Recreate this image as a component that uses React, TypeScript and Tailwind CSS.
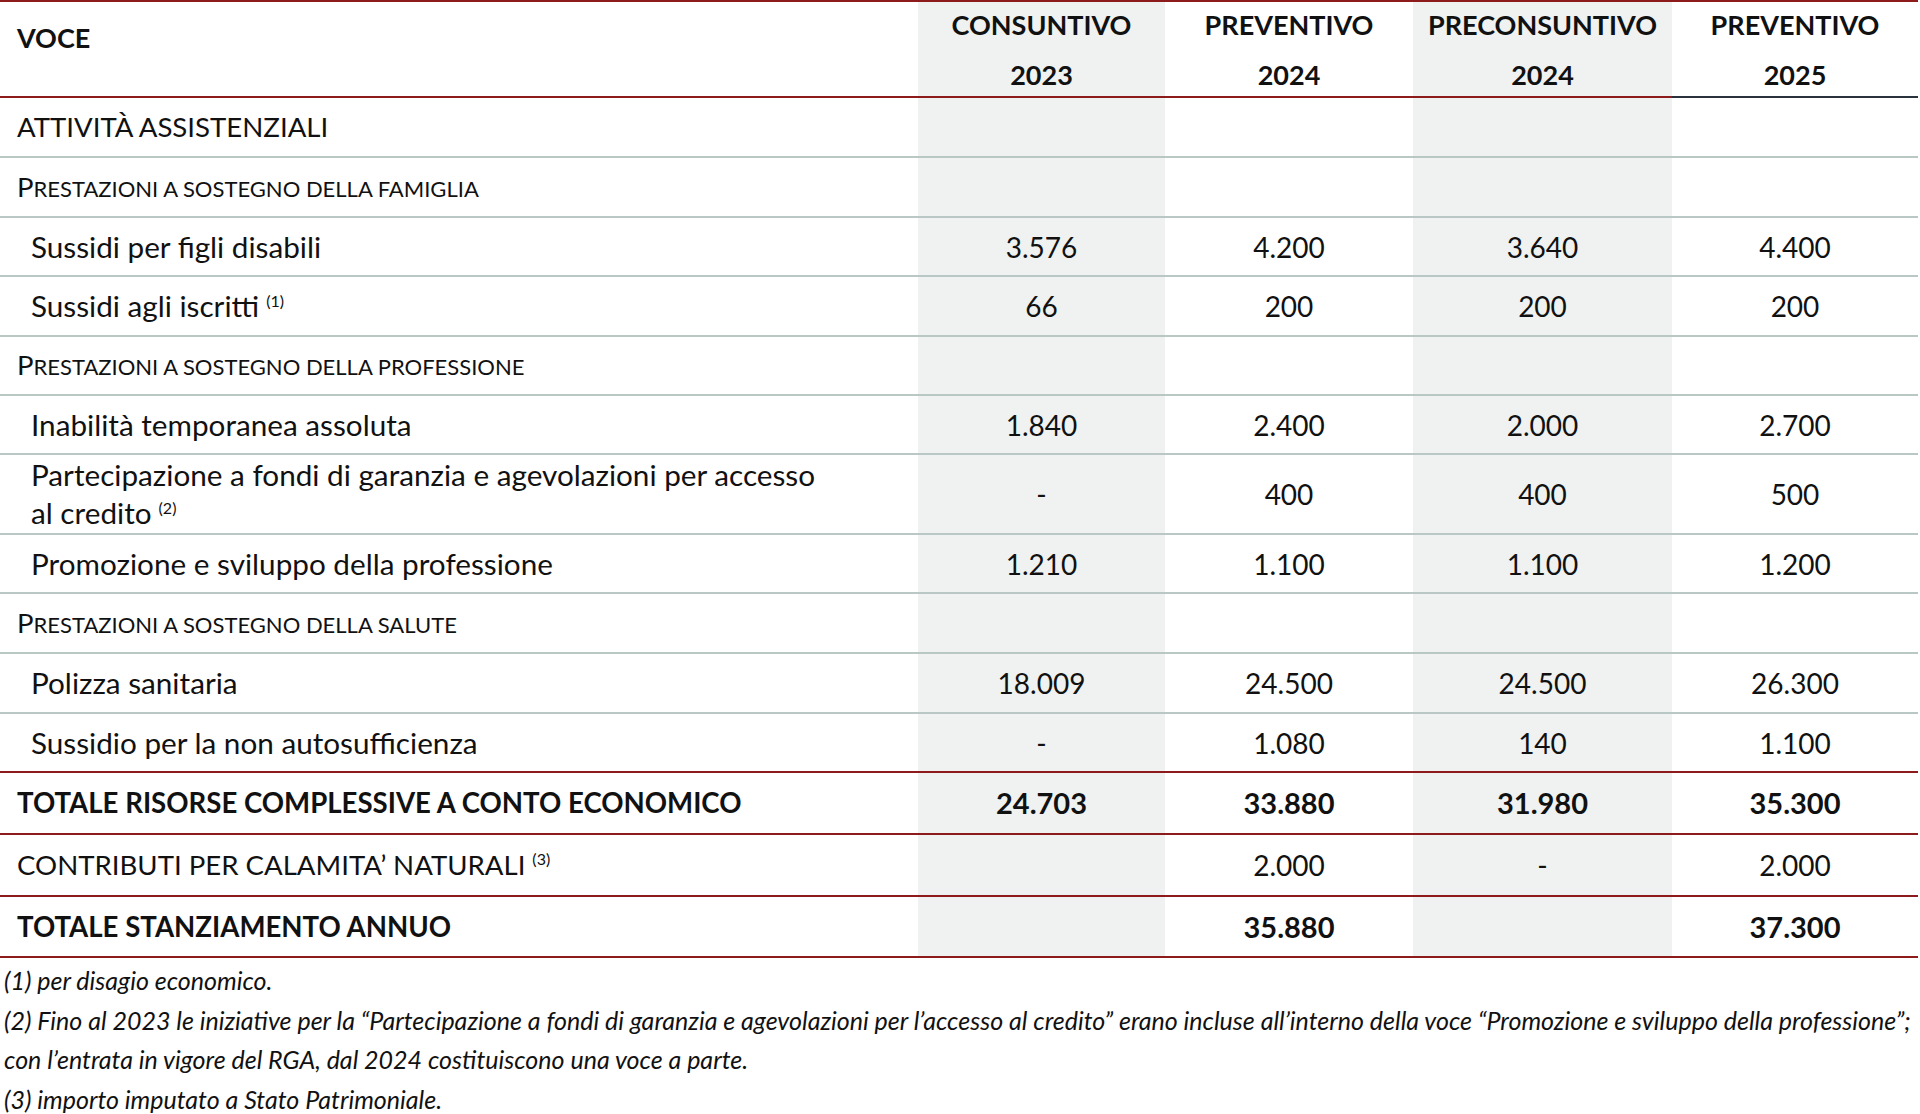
const COLS = "grid grid-cols-[918px_247px_248px_259px_246px]"

type Row = {
  label: React.ReactNode
  kind: "section" | "group" | "item" | "total" | "plain"
  values?: string[]
  h: string
  line: "gray" | "red"
}

const Sup = ({ n }: { n: number }) => (
  <span className="relative -top-[10px] ml-[7px] inline-block text-[16px] leading-none">({n})</span>
)

// maiuscoletto: prima lettera grande, resto piccolo
const SmallCaps = ({ text }: { text: string }) => (
  <>
    <span className="text-[27.5px]">{text[0]}</span>
    <span className="text-[22px] uppercase">{text.slice(1)}</span>
  </>
)

const ROWS: Row[] = [
  { label: "ATTIVITÀ ASSISTENZIALI", kind: "section", h: "h-[60px]", line: "gray" },
  { label: <SmallCaps text="Prestazioni a sostegno della famiglia" />, kind: "group", h: "h-[60px]", line: "gray" },
  { label: "Sussidi per figli disabili", kind: "item", values: ["3.576", "4.200", "3.640", "4.400"], h: "h-[59px]", line: "gray" },
  {
    label: (
      <>
        Sussidi agli iscritti
        <Sup n={1} />
      </>
    ),
    kind: "item",
    values: ["66", "200", "200", "200"],
    h: "h-[60px]",
    line: "gray",
  },
  { label: <SmallCaps text="Prestazioni a sostegno della professione" />, kind: "group", h: "h-[59px]", line: "gray" },
  { label: "Inabilità temporanea assoluta", kind: "item", values: ["1.840", "2.400", "2.000", "2.700"], h: "h-[59px]", line: "gray" },
  {
    label: (
      <>
        Partecipazione a fondi di garanzia e agevolazioni per accesso
        <br />
        al credito
        <Sup n={2} />
      </>
    ),
    kind: "item",
    values: ["-", "400", "400", "500"],
    h: "h-[80px]",
    line: "gray",
  },
  { label: "Promozione e sviluppo della professione", kind: "item", values: ["1.210", "1.100", "1.100", "1.200"], h: "h-[59px]", line: "gray" },
  { label: <SmallCaps text="Prestazioni a sostegno della salute" />, kind: "group", h: "h-[60px]", line: "gray" },
  { label: "Polizza sanitaria", kind: "item", values: ["18.009", "24.500", "24.500", "26.300"], h: "h-[60px]", line: "gray" },
  { label: "Sussidio per la non autosufficienza", kind: "item", values: ["-", "1.080", "140", "1.100"], h: "h-[59px]", line: "red" },
  {
    label: "TOTALE RISORSE COMPLESSIVE A CONTO ECONOMICO",
    kind: "total",
    values: ["24.703", "33.880", "31.980", "35.300"],
    h: "h-[62px]",
    line: "red",
  },
  {
    label: (
      <>
        CONTRIBUTI PER CALAMITA’ NATURALI
        <Sup n={3} />
      </>
    ),
    kind: "plain",
    values: ["", "2.000", "-", "2.000"],
    h: "h-[62px]",
    line: "red",
  },
  { label: "TOTALE STANZIAMENTO ANNUO", kind: "total", values: ["", "35.880", "", "37.300"], h: "h-[61px]", line: "red" },
]

const HEADERS = [
  ["CONSUNTIVO", "2023"],
  ["PREVENTIVO", "2024"],
  ["PRECONSUNTIVO", "2024"],
  ["PREVENTIVO", "2025"],
]

function labelClass(kind: Row["kind"]) {
  switch (kind) {
    case "section":
    case "plain":
      return "pl-[17px] text-[27.6px]"
    case "group":
      return "pl-[17px] pt-[3px]"
    case "item":
      return "pl-[31px] text-[29.7px]"
    case "total":
      return "pl-[17px] text-[27.6px] font-bold"
  }
}

export default function App() {
  return (
    <div
      className="w-[1920px] bg-white text-[#111111]"
      style={{ fontFamily: "Lato, 'Liberation Sans', sans-serif" }}
    >
      <div className="w-[1918px] border-t-2 border-[#8e1b1b]">
        {/* intestazione */}
        <div className={COLS}>
          <div className="h-[96px] border-b-2 border-[#8e1b1b] pl-[17px] pt-[19px] text-[27px] font-bold leading-[34px]">
            VOCE
          </div>
          {HEADERS.map(([a, b], i) => (
            <div
              key={i}
              className={
                "flex h-[96px] flex-col items-center border-b-2 pt-[6px] text-[27px] font-bold " +
                (i === 3 ? "border-[#2a323e] " : "border-[#8e1b1b] ") +
                (i % 2 === 0 ? "bg-[#eff2f0]" : "")
              }
            >
              <span className="leading-[34px]">{a}</span>
              <span className="mt-[16px] leading-[34px]">{b}</span>
            </div>
          ))}
        </div>

        {/* righe */}
        {ROWS.map((r, idx) => (
          <div
            key={idx}
            className={
              COLS +
              " border-b-2 " +
              (r.line === "red" ? "border-[#8e1b1b] " : "border-[#b9c8c5] ") +
              r.h
            }
          >
            <div className={"flex items-center leading-[38px] " + labelClass(r.kind)}>
              <span>{r.label}</span>
            </div>
            {[0, 1, 2, 3].map((c) => (
              <div
                key={c}
                className={
                  "flex items-center justify-center " +
                  (r.kind === "total" ? "text-[29px] font-bold " : "text-[28px] ") +
                  (c % 2 === 0 ? "bg-[#eff2f0]" : "")
                }
              >
                {r.values?.[c] ?? ""}
              </div>
            ))}
          </div>
        ))}
      </div>

      {/* note */}
      <div className="pl-[4px] pt-[3px] text-[25px] italic leading-[39.5px] whitespace-nowrap">
        <p>(1) per disagio economico.</p>
        <p>
          (2) Fino al 2023 le iniziative per la “Partecipazione a fondi di garanzia e agevolazioni per l’accesso al
          credito” erano incluse all’interno della voce “Promozione e sviluppo della professione”;
        </p>
        <p>con l’entrata in vigore del RGA, dal 2024 costituiscono una voce a parte.</p>
        <p>(3) importo imputato a Stato Patrimoniale.</p>
      </div>
    </div>
  )
}
